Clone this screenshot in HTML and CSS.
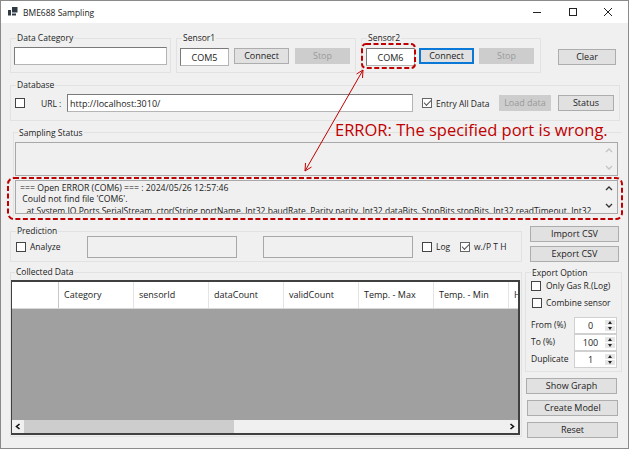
FILE: index.html
```html
<!DOCTYPE html>
<html lang="en">
<head>
<meta charset="utf-8">
<title>BME688 Sampling</title>
<link rel="stylesheet" href="styles.css">
</head>
<body>
<div class="window">
  <header class="titlebar">
    <svg class="appicon" width="10" height="10" viewBox="0 0 10 10"><rect x="4" y="0" width="5.500" height="5.500" fill="#2f3a44"/><rect x="0" y="3" width="3" height="5.500" fill="#2f3a44"/><rect x="4" y="6.500" width="4" height="2" fill="#2f3a44"/></svg>
    <span class="title">BME688 Sampling</span>
    <div class="controls">
      <svg width="10" height="10" viewBox="0 0 10 10"><path d="M0 5.500H8" stroke="#222" fill="none"/></svg>
      <svg width="10" height="10" viewBox="0 0 10 10"><rect x="1.500" y="1.500" width="7" height="7" stroke="#222" fill="none"/></svg>
      <svg width="10" height="10" viewBox="0 0 10 10"><path d="M1 1L9 9M9 1L1 9" stroke="#222" fill="none"/></svg>
    </div>
  </header>

  <main class="form">
    <section class="row row-top">
      <div class="group g-category"><span class="legend">Data Category</span><div class="field f-category"></div></div>
      <div class="group g-sensor1"><span class="legend">Sensor1</span>
        <div class="field f-com center">COM5</div><button class="btn b-connect">Connect</button><button class="btn b-stop off">Stop</button></div>
      <div class="group g-sensor2"><span class="legend">Sensor2</span>
        <div class="field f-com center">COM6</div><button class="btn b-connect focus">Connect</button><button class="btn b-stop off">Stop</button></div>
      <button class="btn b-clear">Clear</button>
    </section>

    <section class="group g-database"><span class="legend">Database</span>
      <span class="check c-db"></span><span class="url-label">URL :</span>
      <div class="field f-url">http://localhost:3010/</div>
      <span class="check on c-entry"></span><span class="lbl">Entry All Data</span>
      <button class="btn b-load off">Load data</button><button class="btn b-status">Status</button>
    </section>

    <section class="group g-status"><span class="legend">Sampling Status</span>
      <div class="log log-empty">
        <div class="scrollbar dim"><svg width="8" height="5" viewBox="0 0 8 5"><path d="M1 4L4 1L7 4" stroke="#c4c4c4" fill="none" stroke-width="1.300"/></svg><svg width="8" height="5" viewBox="0 0 8 5"><path d="M1 1L4 4L7 1" stroke="#c4c4c4" fill="none" stroke-width="1.300"/></svg></div>
      </div>
      <div class="log log-error">
        <div class="log-text">=== Open ERROR (COM6) === : 2024/05/26 12:57:46<br>&nbsp;Could not find file 'COM6'.<br><span class="log-trace">&nbsp;&nbsp;&nbsp;at System.IO.Ports.SerialStream..ctor(String portName, Int32 baudRate, Parity parity, Int32 dataBits, StopBits stopBits, Int32 readTimeout, Int32</span></div>
        <div class="scrollbar"><svg width="8" height="5" viewBox="0 0 8 5"><path d="M1 4L4 1L7 4" stroke="#333" fill="none" stroke-width="1.300"/></svg><svg width="8" height="5" viewBox="0 0 8 5"><path d="M1 1L4 4L7 1" stroke="#333" fill="none" stroke-width="1.300"/></svg></div>
      </div>
    </section>

    <section class="row row-predict">
      <div class="group g-predict"><span class="legend">Prediction</span>
        <span class="check c-analyze"></span><span class="lbl l-analyze">Analyze</span>
        <div class="field flat f-p1"></div><div class="field flat f-p2"></div>
        <span class="check c-log"></span><span class="lbl l-log">Log</span>
        <span class="check on"></span><span class="lbl">w./P T H</span>
      </div>
      <div class="csv">
        <button class="btn">Import CSV</button>
        <button class="btn">Export CSV</button>
      </div>
    </section>

    <section class="row row-data">
      <div class="group g-data"><span class="legend">Collected Data</span>
        <div class="grid-view">
          <div class="grid-head">
            <div class="cell corner"></div>
            <div class="cell">Category</div><div class="cell">sensorId</div><div class="cell">dataCount</div><div class="cell">validCount</div><div class="cell">Temp. - Max</div><div class="cell">Temp. - Min</div><div class="cell last">H</div>
          </div>
          <div class="grid-body"></div>
          <div class="hscroll">
            <svg class="h-arrow" width="12" height="13" viewBox="0 0 12 13"><path d="M7.500 4L4.500 6.500L7.500 9" stroke="#111" fill="none" stroke-width="1.600"/></svg>
            <div class="thumb"></div>
            <svg class="h-arrow h-right" width="12" height="13" viewBox="0 0 12 13"><path d="M4.500 4L7.500 6.500L4.500 9" stroke="#111" fill="none" stroke-width="1.600"/></svg>
          </div>
        </div>
      </div>
      <aside class="side">
        <div class="group g-export"><span class="legend">Export Option</span>
          <div class="opt"><span class="check"></span><span class="lbl">Only Gas R.(Log)</span></div>
          <div class="opt opt-alt"><span class="check"></span><span class="lbl">Combine sensor</span></div>
          <div class="spins">
            <div class="spin-row"><span class="spin-label">From (%)</span><div class="spin"><span class="spin-val">0</span><span class="spin-btns"><i class="up"></i><i class="down"></i></span></div></div>
            <div class="spin-row"><span class="spin-label">To (%)</span><div class="spin"><span class="spin-val">100</span><span class="spin-btns"><i class="up"></i><i class="down"></i></span></div></div>
            <div class="spin-row"><span class="spin-label">Duplicate</span><div class="spin"><span class="spin-val">1</span><span class="spin-btns"><i class="up"></i><i class="down"></i></span></div></div>
          </div>
        </div>
        <button class="btn b-side">Show Graph</button>
        <button class="btn b-side">Create Model</button>
        <button class="btn b-side">Reset</button>
      </aside>
    </section>
  </main>

  <svg class="annotation" width="629" height="449" viewBox="0 0 629 449">
    <rect x="362" y="44" width="53" height="24" rx="4" fill="none" stroke="#c00000" stroke-width="2" stroke-dasharray="5 2.500"/>
    <rect x="8" y="178" width="614" height="41" rx="6" fill="none" stroke="#c00000" stroke-width="2" stroke-dasharray="5 2.500"/>
    <path d="M363 70L305 171M363 70L356.500 74M363 70L362.500 78M305 171L305.500 163M305 171L311.500 167" fill="none" stroke="#c00000" stroke-width="1"/>
  </svg>
  <div class="error-note">ERROR: The specified port is wrong.</div>
</div>
</body>
</html>
```
FILE: styles.css
```css
* { box-sizing: border-box; }
html, body { margin: 0; padding: 0; }
body { width: 629px; height: 449px; overflow: hidden; background: #f0f0f0; font-family: "Open Sans", "Noto Sans", sans-serif; font-size: 9px; color: #222; }
.window { position: relative; width: 629px; height: 449px; border: 1px solid #8a8a8a; background: #f0f0f0; overflow: hidden; }
.titlebar { display: flex; align-items: center; height: 22px; background: #fff; padding-left: 7px; }
.appicon { margin-right: 5px; margin-top: -1px; }
.title { font-size: 8.500px; color: #222; }
.controls { margin-left: auto; display: flex; gap: 25px; padding-right: 15px; }
.form { padding: 15px 7px 0 9px; }
.row { display: flex; }

.group { position: relative; border: 1px solid #e2e2e2; flex: none; }
.legend { position: absolute; left: 5px; top: -7px; padding: 0 1px; background: #f0f0f0; font-size: 8.500px; line-height: 12px; white-space: nowrap; }
.field { background: #fff; border: 1px solid #7a7a7a; border-right-color: #b5b5b5; border-bottom-color: #b5b5b5; flex: none; display: flex; align-items: center; padding-left: 2px; white-space: nowrap; }
.field.flat { background: #f0f0f0; border-color: #a8a8a8; }
.center { justify-content: center; padding: 0; }
.btn { flex: none; height: 16px; padding: 0; background: #e1e1e1; border: 1px solid #adadad; font: inherit; color: #222; line-height: 12px; }
.btn.off { background: #cdcdcd; border-color: #cdcdcd; color: #9a9a9a; }
.btn.focus { border: 1px solid #0a78d7; box-shadow: inset 0 0 0 1px #0a78d7; }
.check { display: inline-block; flex: none; width: 10px; height: 10px; background: #fff; border: 1px solid #444; position: relative; }
.check.on { border-color: #666; }
.check.on::after { content: ""; position: absolute; left: 1px; top: 1px; width: 6px; height: 3px; border-left: 1px solid #555; border-bottom: 1px solid #555; transform: rotate(-45deg); }
.lbl { flex: none; white-space: nowrap; font-size: 8.500px; }

.row-top { align-items: flex-start; gap: 5px; height: 35px; }
.g-category { width: 161px; height: 35px; padding: 8px 3px 0; }
.f-category { width: 153px; height: 18px; }
.g-sensor1, .g-sensor2 { width: 180px; height: 35px; display: flex; align-items: flex-start; padding: 9px 3px 0; gap: 5px; }
.g-sensor2 { padding: 9px 4px 0; }
.g-sensor2 .f-com { margin-right: -1px; }
.f-com { width: 49px; height: 18px; }
.b-connect { width: 55px; }
.b-stop { width: 55px; margin-left: 1px; }
.g-sensor2 .b-stop { margin-left: 0; }
.b-clear { width: 58px; margin: 11px 0 0 12px; }

.g-database { margin-top: 12px; width: 610px; height: 36px; display: flex; align-items: center; padding: 0 5px 0 4px; }
.c-db { margin-right: 16px; }
.url-label { width: 26px; flex: none; font-size: 8.500px; }
.f-url { width: 346px; height: 18px; }
.c-entry { margin-left: 9px; margin-right: 4px; }
.b-load { width: 52px; margin-left: auto; }
.b-status { width: 56px; margin-left: 7px; }

.g-status { margin: 11px 0 0 3px; width: 609px; height: 85px; padding: 9px 3px 0 1px; border-right-color: #f0f0f0; border-bottom-color: #f0f0f0; }
.g-status .legend { left: 4px; top: -6px; }
.log { display: flex; width: 603px; height: 34px; border: 1px solid #a8a8a8; background: #f0f0f0; }
.log-error { margin-top: 4px; overflow: hidden; }
.log-text { flex: 1; min-width: 0; padding: 2px 4px; line-height: 11px; font-size: 8.700px; white-space: nowrap; overflow: hidden; }
.log-trace { font-size: 8.500px; }
.scrollbar { margin-left: auto; width: 17px; flex: none; display: flex; flex-direction: column; justify-content: space-between; align-items: center; padding: 5px 0; }

.row-predict { margin-top: 9px; height: 36px; }
.g-predict { margin-top: 5px; width: 512px; height: 31px; display: flex; align-items: center; padding: 0 5px; }
.c-analyze { margin-right: 4px; }
.l-analyze { width: 36px; }
.f-p1 { width: 150px; height: 22px; margin-left: 21px; }
.f-p2 { width: 150px; height: 22px; margin-left: 26px; }
.c-log { margin-left: 9px; margin-right: 4px; }
.l-log { width: 24px; }
.g-predict .check.on { margin-right: 4px; }
.csv { margin-left: 8px; display: flex; flex-direction: column; gap: 4px; }
.csv .btn { width: 89px; }

.row-data { margin-top: 10px; }
.g-data { width: 512px; height: 165px; padding: 7px 0 0 0; }
.g-data .legend { left: 4px; }
.grid-view { width: 509px; height: 155px; border: 1px solid #404040; border-width: 2px 2px 2px 1px; background: #a0a0a0; display: flex; flex-direction: column; }
.grid-head { display: flex; height: 27px; flex: none; background: #fff; border-bottom: 1px solid #d8d8d8; overflow: hidden; }
.cell { width: 75px; flex: none; padding-left: 5px; line-height: 26px; border-right: 1px solid #e4e4e4; white-space: nowrap; }
.corner { width: 47px; border-right: 1px solid #c8c8c8; }
.last { width: 20px; border: 0; }
.grid-body { flex: 1; }
.hscroll { height: 13px; flex: none; display: flex; background: #f0f0f0; }
.h-arrow { flex: none; display: block; }
.thumb { width: 210px; background: #cdcdcd; }
.h-right { margin-left: auto; }

.side { margin-left: 3px; width: 97px; display: flex; flex-direction: column; align-items: flex-start; }
.g-export { width: 97px; height: 100px; padding: 4px 5px 0 5px; }
.g-export .legend { top: -6px; }
.opt { display: flex; align-items: center; gap: 5px; height: 17px; }
.opt-alt { margin-left: 1px; gap: 4px; }
.spins { margin-top: 6px; }
.spin-row { display: flex; align-items: center; justify-content: space-between; height: 17px; margin-right: -1px; font-size: 8.500px; }
.spin-label { margin-top: -2px; }
.spin { width: 43px; height: 17px; background: #fff; border: 1px solid #d0d0d0; display: flex; font-size: 9px; }
.spin-val { flex: 1; text-align: center; line-height: 15px; padding-left: 2px; }
.spin-btns { width: 12px; padding: 2px 1px; background: #fff; display: flex; flex-direction: column; gap: 1px; }
.spin-btns i { flex: 1; background: #e6e6e6; display: flex; align-items: center; justify-content: center; }
.spin-btns i::before { content: ""; border-left: 2.500px solid transparent; border-right: 2.500px solid transparent; }
.spin-btns .up::before { border-bottom: 3px solid #222; }
.spin-btns .down::before { border-top: 3px solid #222; }
.b-side { width: 91px; margin-left: 2px; margin-top: 6px; }
.b-side:first-of-type { margin-left: 1px; }

.annotation { position: absolute; left: -1px; top: -1px; pointer-events: none; }
.error-note { position: absolute; left: 334px; top: 118px; color: #c00000; font-size: 16.500px; line-height: 22px; white-space: nowrap; }
```
